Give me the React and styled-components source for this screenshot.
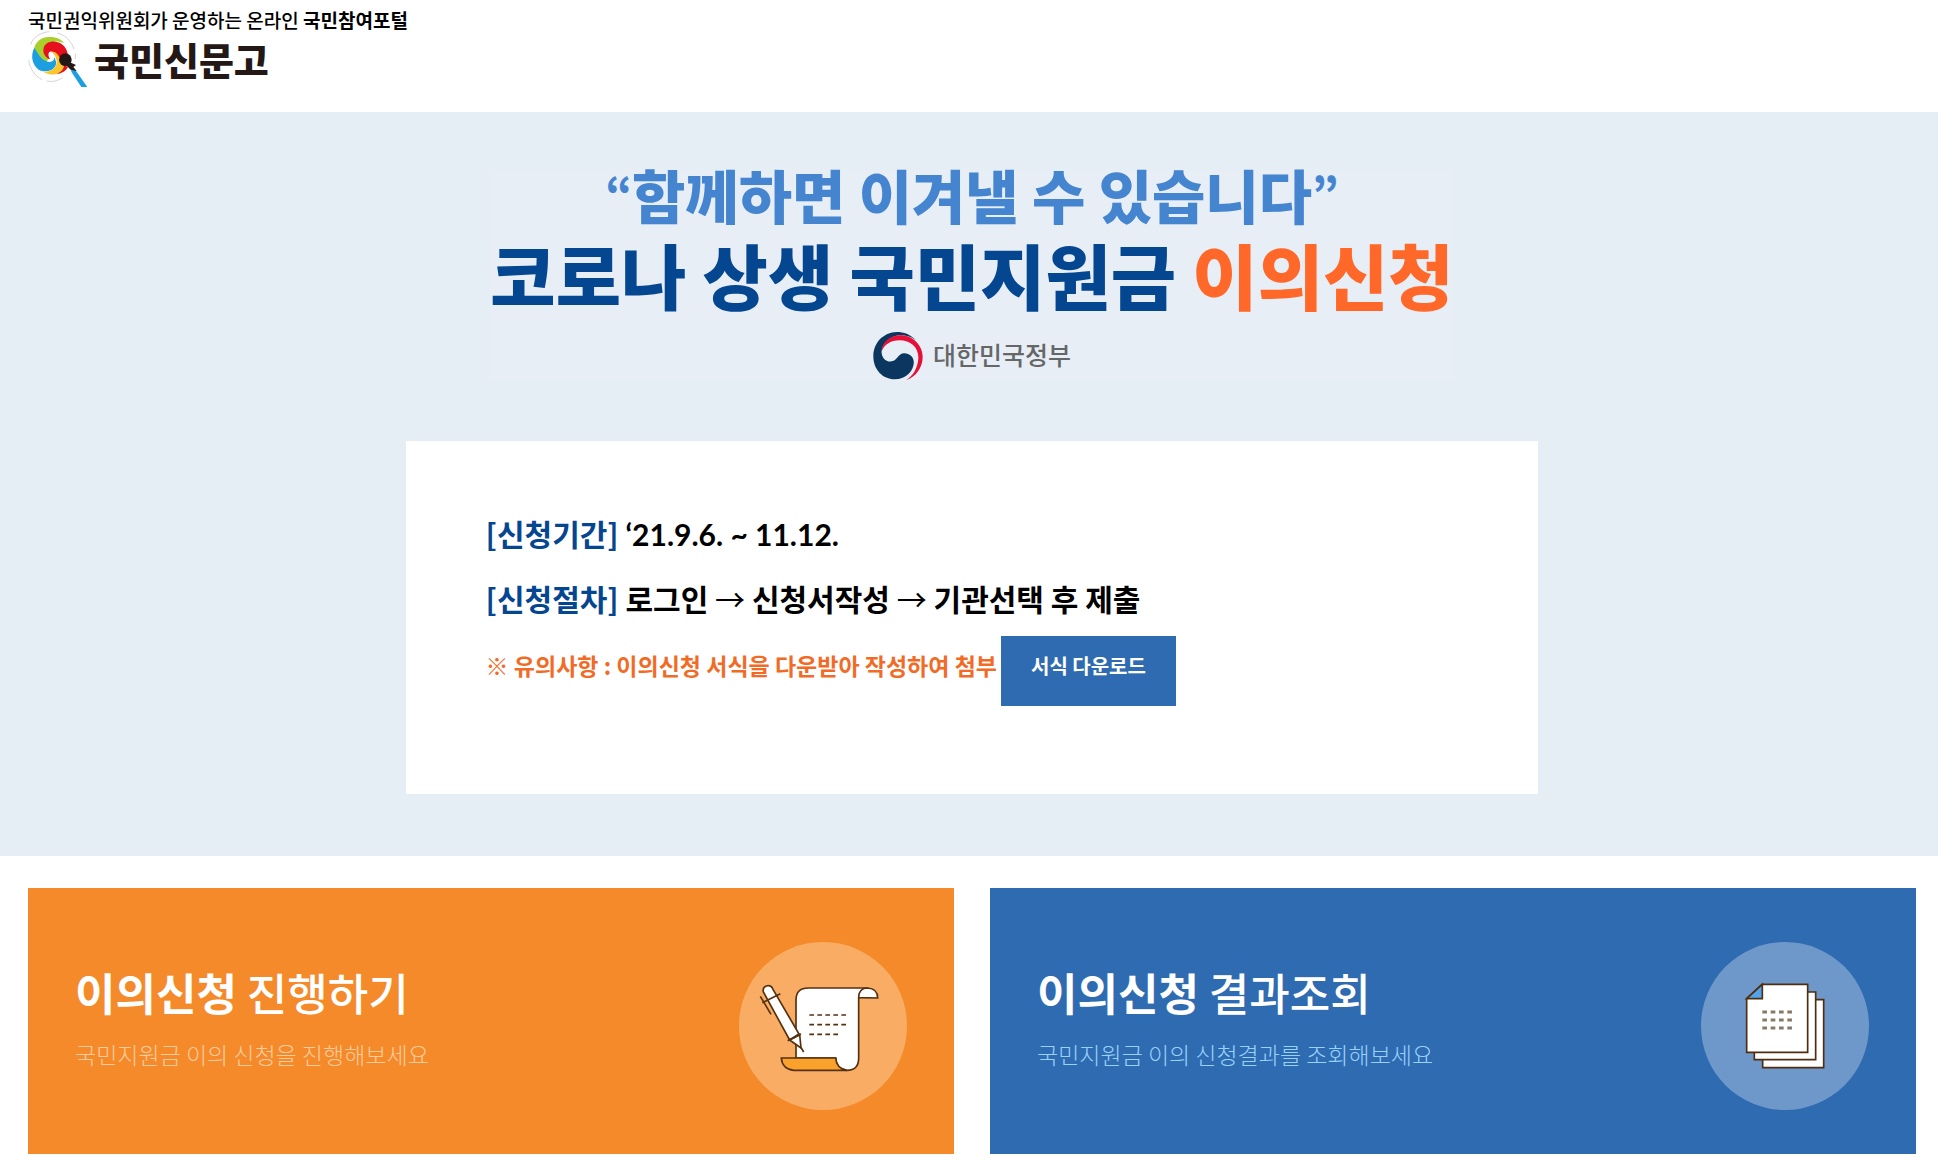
import React from "react";
import styled, { createGlobalStyle } from "styled-components";

export default function App() {
  return (
    <>
      <GlobalStyle />
      <Header>
        <Tagline>
          국민권익위원회가 운영하는 온라인 <strong>국민참여포털</strong>
        </Tagline>
        <Brand href="#">
          <DrumLogo />
          <BrandName>국민신문고</BrandName>
        </Brand>
      </Header>

      <Hero>
        <Banner>
          <Slogan>
            <Quote>“</Quote>함께하면 이겨낼 수 있습니다<Quote>”</Quote>
          </Slogan>
          <Title>
            코로나 상생 국민지원금 <em>이의신청</em>
          </Title>
          <Government>
            <GovernmentLogo />
            대한민국정부
          </Government>
        </Banner>

        <Notice>
          <NoticeLine>
            <Label>[신청기간]</Label> <Period>‘21.9.6. ~ 11.12.</Period>
          </NoticeLine>
          <NoticeLine>
            <Label>[신청절차]</Label> 로그인 <Arrow>→</Arrow> 신청서작성{" "}
            <Arrow>→</Arrow> 기관선택 후 제출
          </NoticeLine>
          <Caution>
            ※ 유의사항 : 이의신청 서식을 다운받아 작성하여 첨부
            <Download type="button">서식 다운로드</Download>
          </Caution>
        </Notice>
      </Hero>

      <Cards>
        <Card href="#" $bg="#f58a2b">
          <div>
            <CardTitle>
              <strong>이의신청</strong> 진행하기
            </CardTitle>
            <CardText $color="#fdcc9c">
              국민지원금 이의 신청을 진행해보세요
            </CardText>
          </div>
          <ScrollIcon />
        </Card>
        <Card href="#" $bg="#2f6bb1">
          <div>
            <CardTitle>
              <strong>이의신청</strong> 결과조회
            </CardTitle>
            <CardText $color="#98d2fc">
              국민지원금 이의 신청결과를 조회해보세요
            </CardText>
          </div>
          <PapersIcon />
        </Card>
      </Cards>
    </>
  );
}

function DrumLogo() {
  return (
    <svg width="60" height="56" viewBox="84 92 180 168" fill="none">
      <path d="M92 132C100 110 122 96 148 94M172 98C196 104 214 122 222 146M86 180C90 206 104 226 126 238M140 242C160 246 176 240 188 232M226 160V176" stroke="#d4d4d4" strokeWidth="3" />
      <path d="M102 146C106 122 128 108 150 110C170 110 184 117 192 128C162 116 136 128 132 150C130 162 138 170 148 174L136 188C114 182 102 166 102 146Z" fill="#a9cf2c" />
      <path d="M103 142C91 165 96 192 116 208C132 217 152 213 162 203C171 194 170 182 162 170C164 184 150 188 138 182C120 174 114 158 103 142Z" fill="#1c9fe0" />
      <path d="M130 214C152 216 170 204 170 186C170 172 162 160 152 153C170 154 182 168 184 180C196 192 200 202 194 210C174 226 148 226 130 214Z" fill="#fbc52d" />
      <path d="M131 142C136 128 150 122 166 124C188 126 204 145 204 170L182 178C176 162 162 150 148 155C143 161 146 171 151 177C136 173 127 158 131 142Z" fill="#e60f1e" />
      <path d="M192 194L204 200C198 212 186 219 170 222C184 214 192 206 192 194Z" fill="#e60f1e" />
      <path d="M212 196L224 206L262 260H244L214 214Z" fill="#1c9fe0" />
      <path d="M206 184L228 194L220 200L230 212L212 208L200 196Z" fill="#231815" />
      <circle cx="196" cy="178" r="19" fill="#231815" />
    </svg>
  );
}

function GovernmentLogo() {
  return (
    <svg width="50" height="50" viewBox="1187 544 152 150">
      <path d="M1318 572C1300 552 1280 546 1260 546C1217 547 1188 580 1188 620C1188 662 1218 690 1252 690C1290 690 1311 662 1311 638C1311 622 1298 611 1282 611C1262 611 1262 636 1240 636C1224 636 1213 622 1213 606C1215 577 1242 556 1272 556C1292 556 1308 563 1318 572Z" fill="#0a365f" />
      <path d="M1213 606C1215 575 1240 556 1270 556C1310 556 1338 588 1338 622C1338 655 1316 684 1288 692C1310 678 1323 655 1325 625C1326 592 1300 571 1268 571C1240 571 1220 585 1213 606Z" fill="#e60f37" />
    </svg>
  );
}

function ScrollIcon() {
  return (
    <RoundIcon viewBox="54 66 504 504" fill="none" stroke="#55310f" strokeWidth="5">
      <circle cx="306" cy="318" r="252" fill="#f9ad64" stroke="none" />
      <path d="M225 414V240Q225 204 262 204H440Q413 206 413 236V414Q413 451 378 451Q345 448 344 414Z" fill="#fff" />
      <path d="M413 233Q413 204 440 204Q470 206 470 234Z" fill="#fff" />
      <path d="M181 414H344Q346 446 378 451H218Q184 448 181 414Z" fill="#faa22c" />
      <path d="M265 285H380M265 314H380M265 343H356" strokeDasharray="14 10" />
      <path d="M127 216Q124 202 136 198Q150 194 156 208L234 342L206 360Z" fill="#fff" />
      <path d="M206 360L236 344L240 384Z" fill="#fff" />
      <path d="M200 362L240 342M240 382L248 396M124 248L178 221M118 229L150 283" />
    </RoundIcon>
  );
}

function PapersIcon() {
  return (
    <RoundIcon viewBox="66 66 504 504" stroke="#4f2d10" strokeWidth="5">
      <circle cx="318" cy="318" r="252" fill="#6e98ca" stroke="none" />
      <path d="M251 239H434V443H251Z" fill="#fff" />
      <path d="M226 216H410V419H226Z" fill="#fff" />
      <path d="M203 236L249 193H386V397H203Z" fill="#fff" />
      <path d="M203 236L250 193V236Z" fill="#54a3ea" />
      <path d="M250 276H340M250 300H340M250 324H340" stroke="#8a7868" strokeWidth="9" strokeDasharray="14 11" />
    </RoundIcon>
  );
}

const GlobalStyle = createGlobalStyle`
  * {
    box-sizing: border-box;
  }
  body {
    margin: 0;
    background: #fff;
    color: #000;
    font-family: "Noto Sans CJK KR", sans-serif;
  }
  svg {
    display: block;
    flex-shrink: 0;
  }
`;

const Header = styled.header`
  padding: 8px 22px 25px 28px;
`;

const Tagline = styled.p`
  margin: 0;
  font-size: 19px;
  line-height: 23px;
  font-weight: 500;
  strong {
    font-weight: 700;
  }
`;

const Brand = styled.a`
  display: inline-flex;
  align-items: center;
  gap: 6px;
  height: 56px;
  color: #231815;
  text-decoration: none;
  vertical-align: top;
`;

const BrandName = styled.span`
  font-size: 38px;
  line-height: 56px;
  font-weight: 900;
`;

const Hero = styled.section`
  display: flex;
  flex-direction: column;
  align-items: center;
  gap: 60px;
  padding: 58px 22px 62px 28px;
  background: #e5edf5;
`;

const Banner = styled.div`
  display: flex;
  flex-direction: column;
  align-items: center;
  background: #e7eef6;
`;

const Slogan = styled.p`
  margin: 0;
  color: #4585d0;
  font-size: 58px;
  line-height: 46px;
  font-weight: 900;
`;

const Quote = styled.span`
  font-size: 42px;
  line-height: 1;
  vertical-align: 10px;
`;

const Title = styled.h1`
  margin: 18px 0 0;
  color: #054690;
  font-size: 71px;
  line-height: 76px;
  font-weight: 900;
  em {
    color: #ff6829;
    font-style: normal;
  }
`;

const Government = styled.div`
  display: flex;
  gap: 10px;
  margin-top: 20px;
  color: #666;
  font-size: 25px;
  line-height: 46px;
  font-weight: 500;
`;

const Notice = styled.div`
  width: 60%;
  padding: 60px 80px 88px;
  background: #fff;
`;

const NoticeLine = styled.p`
  margin: 0;
  font-size: 30px;
  line-height: 64px;
  font-weight: 700;
`;

const Label = styled.span`
  color: #054690;
`;

const Period = styled.span`
  font-family: Lato, "Noto Sans CJK KR", sans-serif;
`;

const Arrow = styled.span`
  font-weight: 400;
`;

const Caution = styled.div`
  display: flex;
  gap: 4px;
  margin-top: 6px;
  color: #f26b26;
  font-size: 23px;
  line-height: 58px;
  font-weight: 700;
`;

const Download = styled.button`
  height: 70px;
  padding: 0 30px 10px;
  border: 0;
  background: #2f6bb1;
  color: #fff;
  font: inherit;
  font-size: 20px;
  line-height: 60px;
  cursor: pointer;
`;

const Cards = styled.main`
  display: grid;
  grid-template-columns: 1fr 1fr;
  gap: 36px;
  padding: 32px 22px 20px 28px;
`;

const Card = styled.a`
  display: flex;
  justify-content: space-between;
  padding: 54px 47px 44px;
  background: ${(props) => props.$bg};
  color: #fff;
  text-decoration: none;
`;

const CardTitle = styled.h2`
  margin: 18px 0 0;
  font-size: 44px;
  line-height: 64px;
  font-weight: 500;
  strong {
    font-weight: 700;
  }
`;

const CardText = styled.p`
  margin: 14px 0 0;
  color: ${(props) => props.$color};
  font-size: 23px;
  line-height: 32px;
  font-weight: 300;
`;

const RoundIcon = styled.svg`
  width: 168px;
  height: 168px;
`;
